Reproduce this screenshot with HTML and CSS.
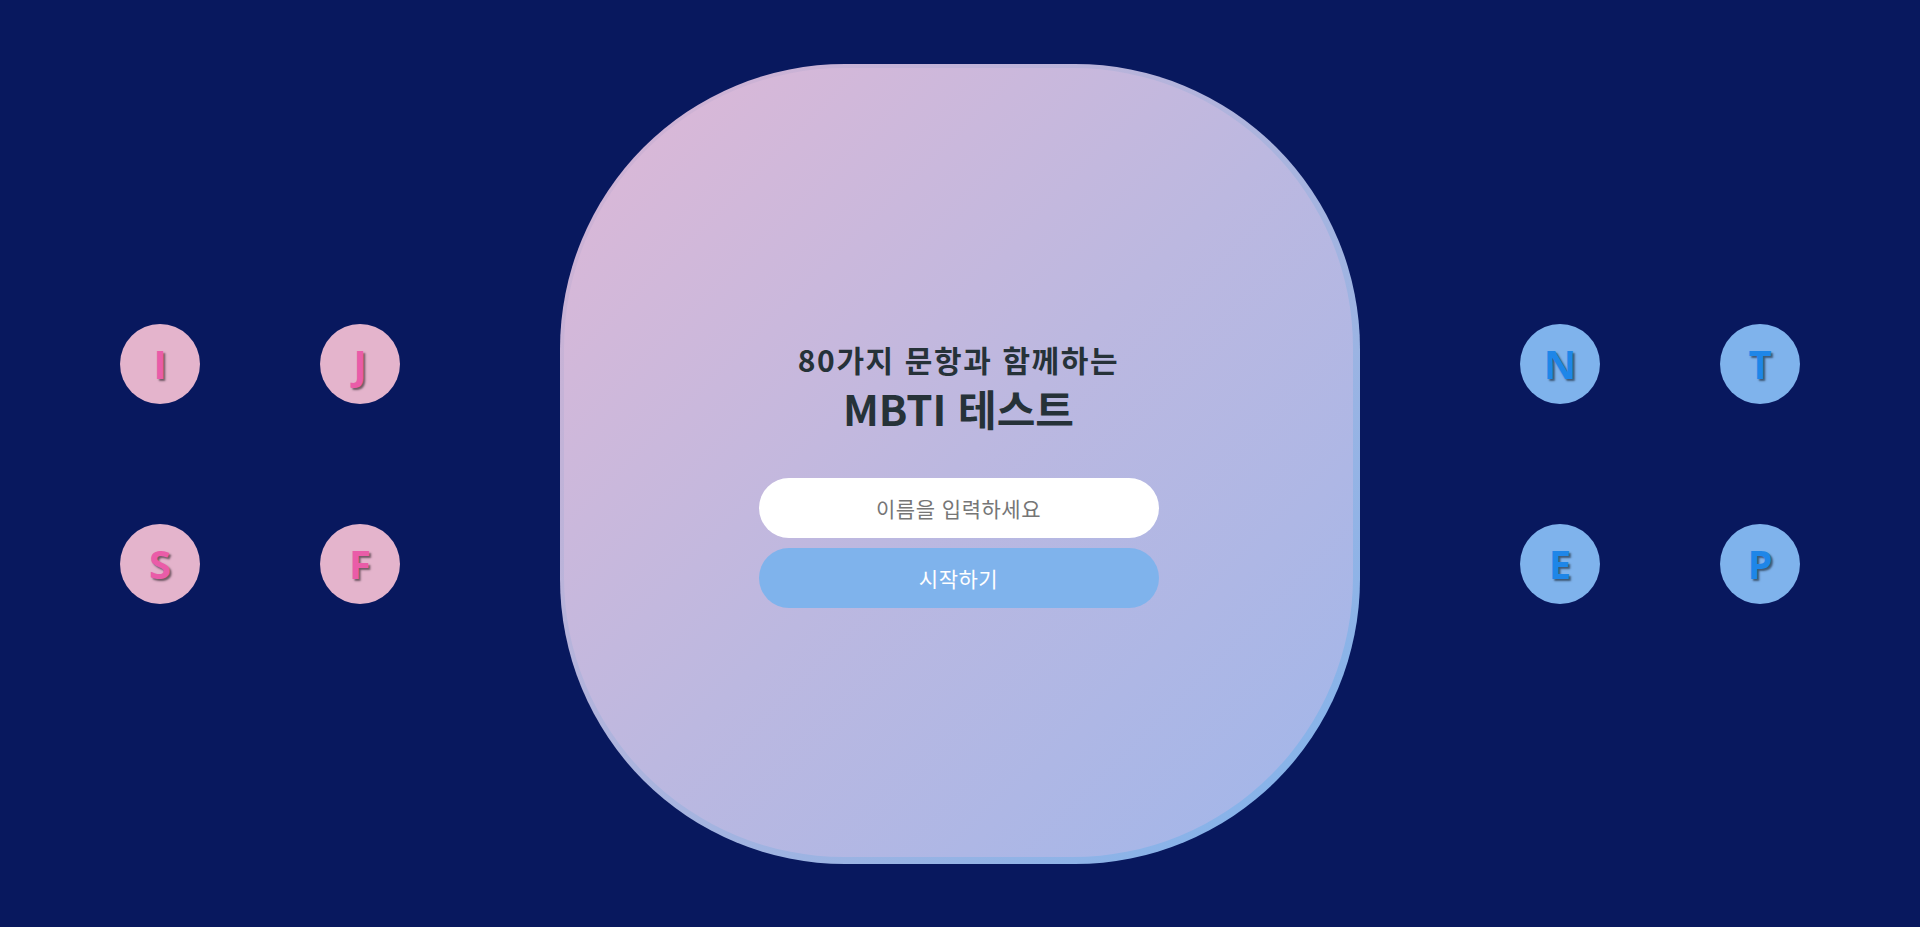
FILE: index.html
```html
<!DOCTYPE html>
<html lang="ko">
<head>
<meta charset="utf-8">
<title>MBTI 테스트</title>
<link rel="stylesheet" href="styles.css">
</head>
<body>
<main class="page">
  <div class="letters">
    <div class="dot pink">I</div>
    <div class="dot pink">J</div>
    <div class="dot pink">S</div>
    <div class="dot pink">F</div>
  </div>
  <section class="card">
    <div class="card-inner">
      <h1 class="title">
        <span class="sub">80가지 문항과 함께하는</span>
        <span class="main">MBTI 테스트</span>
      </h1>
      <form class="form">
        <input class="name" type="text" placeholder="이름을 입력하세요">
        <button class="start" type="button">시작하기</button>
      </form>
    </div>
  </section>
  <div class="letters">
    <div class="dot blue">N</div>
    <div class="dot blue">T</div>
    <div class="dot blue">E</div>
    <div class="dot blue">P</div>
  </div>
</main>
</body>
</html>
```
FILE: styles.css
```css
html, body {
  margin: 0;
  padding: 0;
  height: 100%;
}
body {
  background: #08185e;
  font-family: "Open Sans", "Noto Sans CJK KR", sans-serif;
}
.page {
  height: 100vh;
  display: flex;
  align-items: center;
  justify-content: center;
  gap: 160px;
}
.letters {
  display: grid;
  grid-template-columns: 80px 80px;
  grid-template-rows: 80px 80px;
  column-gap: 120px;
  row-gap: 120px;
  margin-top: 1px;
}
.dot {
  width: 80px;
  height: 80px;
  border-radius: 50%;
  display: flex;
  align-items: center;
  justify-content: center;
  font-family: "Open Sans", sans-serif;
  font-weight: 700;
  font-size: 40px;
  line-height: 1;
  text-shadow: 2px 2px 2px rgba(0, 0, 0, 0.5);
}
.pink {
  background: #e4b4cc;
  color: #ea5ca8;
}
.blue {
  background: #7fb3ec;
  color: #1e86e8;
}
.card {
  width: 800px;
  height: 800px;
  box-sizing: border-box;
  border-radius: 285px;
  padding: 4px 7px 7px 4px;
  background: linear-gradient(135deg, #d8b2d2 0%, #aab4de 50%, #7fb3ec 100%);
  display: flex;
}
.card-inner {
  flex: 1;
  border-radius: 280px;
  background: linear-gradient(135deg, #dfb8d6 0%, #bcb8e0 50%, #a0b6ea 100%);
  display: flex;
  flex-direction: column;
  align-items: center;
  justify-content: center;
  padding-top: 22px;
}
.title {
  margin: 0;
  display: flex;
  flex-direction: column;
  align-items: center;
  color: #263238;
  font-family: "Noto Sans CJK KR", sans-serif;
  font-weight: 700;
}
.sub {
  font-size: 30px;
  line-height: 40px;
  letter-spacing: 1.6px;
}
.main {
  font-size: 42px;
  line-height: 58px;
}
.form {
  margin-top: 41px;
  display: flex;
  flex-direction: column;
  gap: 10px;
}
.name, .start {
  width: 400px;
  height: 60px;
  box-sizing: border-box;
  border: none;
  border-radius: 30px;
  font-family: "Noto Sans CJK KR", sans-serif;
  font-size: 21px;
  text-align: center;
  outline: none;
}
.name {
  background: #ffffff;
  color: #333;
  letter-spacing: 0.5px;
}
.name::placeholder {
  color: #767676;
}
.start {
  background: #7fb3ec;
  color: #ffffff;
  font-weight: 400;
  letter-spacing: 0.5px;
  cursor: pointer;
}
```
